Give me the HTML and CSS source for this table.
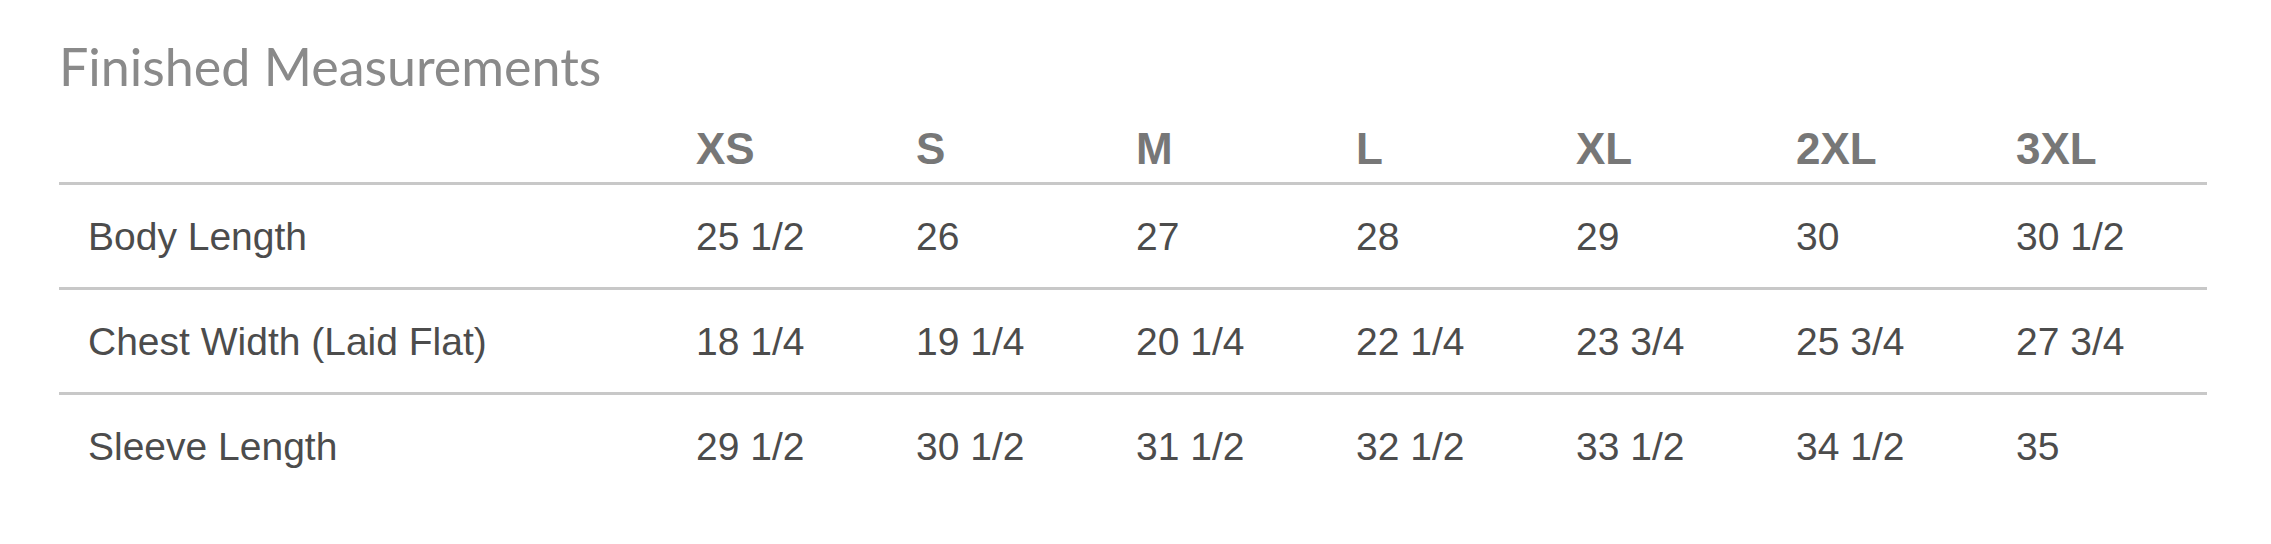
FILE: index.html
```html
<!DOCTYPE html>
<html lang="en">
<head>
<meta charset="utf-8">
<title>Finished Measurements</title>
<link rel="stylesheet" href="styles.css">
</head>
<body>
<section class="measure">
  <h2 class="measure-title">Finished Measurements</h2>
  <table class="size-table">
    <colgroup>
      <col class="col-label">
      <col class="col-size"><col class="col-size"><col class="col-size"><col class="col-size"><col class="col-size"><col class="col-size"><col class="col-size">
    </colgroup>
    <thead>
      <tr>
        <th></th>
        <th>XS</th><th>S</th><th>M</th><th>L</th><th>XL</th><th>2XL</th><th>3XL</th>
      </tr>
    </thead>
    <tbody>
      <tr>
        <td>Body Length</td>
        <td>25 1/2</td><td>26</td><td>27</td><td>28</td><td>29</td><td>30</td><td>30 1/2</td>
      </tr>
      <tr>
        <td>Chest Width (Laid Flat)</td>
        <td>18 1/4</td><td>19 1/4</td><td>20 1/4</td><td>22 1/4</td><td>23 3/4</td><td>25 3/4</td><td>27 3/4</td>
      </tr>
      <tr>
        <td>Sleeve Length</td>
        <td>29 1/2</td><td>30 1/2</td><td>31 1/2</td><td>32 1/2</td><td>33 1/2</td><td>34 1/2</td><td>35</td>
      </tr>
    </tbody>
  </table>
</section>
</body>
</html>
```
FILE: styles.css
```css
html, body {
  margin: 0;
  padding: 0;
  background: #ffffff;
}

.measure {
  padding: 0 0 0 59px;
  width: 2148px;
}

.measure-title {
  margin: 0;
  padding-top: 36px;
  font-family: Lato, "Liberation Sans", sans-serif;
  font-weight: 400;
  font-size: 52px;
  line-height: 60px;
  color: #8a8a8a;
}

.size-table {
  width: 2148px;
  border-collapse: collapse;
  table-layout: fixed;
  font-family: "Liberation Sans", Arial, sans-serif;
}

.col-label {
  width: 608px;
}

.col-size {
  width: 220px;
}

.size-table th,
.size-table td {
  padding: 0 0 0 29px;
  text-align: left;
  white-space: nowrap;
}

.size-table thead tr {
  border-bottom: 3px solid #c8c8c8;
}

.size-table th {
  font-weight: 700;
  font-size: 44px;
  line-height: 50px;
  height: 78px;
  vertical-align: bottom;
  padding-bottom: 8px;
  color: #777777;
}

.size-table td {
  font-size: 39px;
  height: 102px;
  line-height: 45px;
  vertical-align: middle;
  color: #4c4c4c;
}

.size-table tbody tr {
  border-bottom: 3px solid #c8c8c8;
}

.size-table tbody tr:last-child {
  border-bottom: none;
}
```
